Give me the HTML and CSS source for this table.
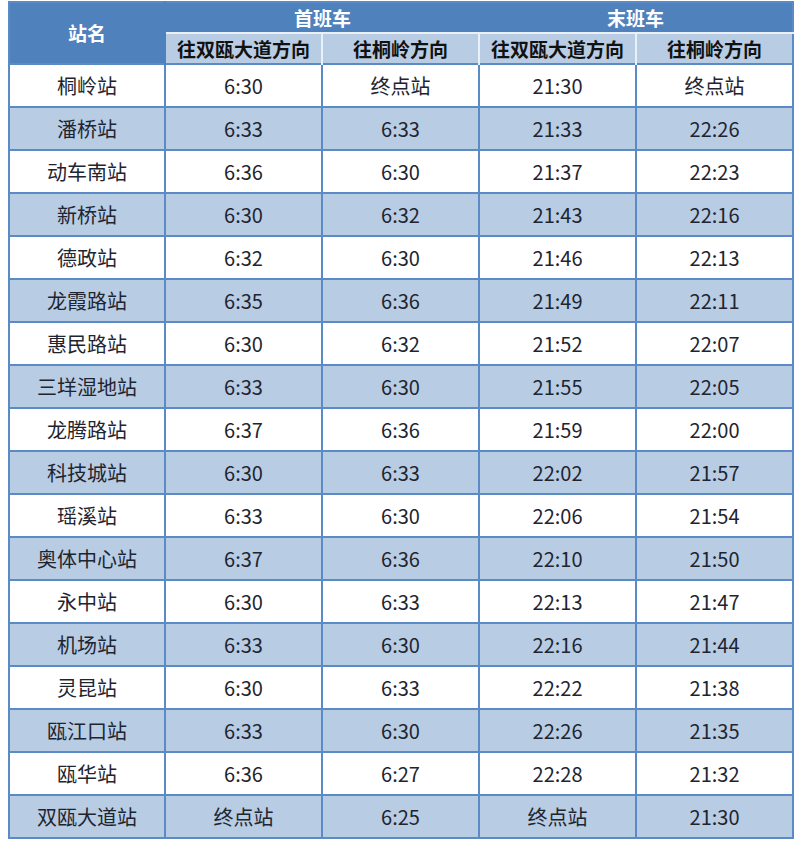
FILE: index.html
```html
<!DOCTYPE html>
<html lang="zh-CN">
<head>
<meta charset="utf-8">
<link rel="stylesheet" href="styles.css">
</head>
<body>
<table class="tt">
  <colgroup>
    <col class="c1"><col class="c"><col class="c"><col class="c"><col class="c">
  </colgroup>
  <thead>
    <tr class="h1">
      <th rowspan="2" class="name">站名</th>
      <th colspan="2" class="grp">首班车</th>
      <th colspan="2" class="grp">末班车</th>
    </tr>
    <tr class="h2">
      <th>往双瓯大道方向</th><th>往桐岭方向</th><th>往双瓯大道方向</th><th>往桐岭方向</th>
    </tr>
  </thead>
  <tbody>
    <tr><td>桐岭站</td><td>6:30</td><td>终点站</td><td>21:30</td><td>终点站</td></tr>
    <tr><td>潘桥站</td><td>6:33</td><td>6:33</td><td>21:33</td><td>22:26</td></tr>
    <tr><td>动车南站</td><td>6:36</td><td>6:30</td><td>21:37</td><td>22:23</td></tr>
    <tr><td>新桥站</td><td>6:30</td><td>6:32</td><td>21:43</td><td>22:16</td></tr>
    <tr><td>德政站</td><td>6:32</td><td>6:30</td><td>21:46</td><td>22:13</td></tr>
    <tr><td>龙霞路站</td><td>6:35</td><td>6:36</td><td>21:49</td><td>22:11</td></tr>
    <tr><td>惠民路站</td><td>6:30</td><td>6:32</td><td>21:52</td><td>22:07</td></tr>
    <tr><td>三垟湿地站</td><td>6:33</td><td>6:30</td><td>21:55</td><td>22:05</td></tr>
    <tr><td>龙腾路站</td><td>6:37</td><td>6:36</td><td>21:59</td><td>22:00</td></tr>
    <tr><td>科技城站</td><td>6:30</td><td>6:33</td><td>22:02</td><td>21:57</td></tr>
    <tr><td>瑶溪站</td><td>6:33</td><td>6:30</td><td>22:06</td><td>21:54</td></tr>
    <tr><td>奥体中心站</td><td>6:37</td><td>6:36</td><td>22:10</td><td>21:50</td></tr>
    <tr><td>永中站</td><td>6:30</td><td>6:33</td><td>22:13</td><td>21:47</td></tr>
    <tr><td>机场站</td><td>6:33</td><td>6:30</td><td>22:16</td><td>21:44</td></tr>
    <tr><td>灵昆站</td><td>6:30</td><td>6:33</td><td>22:22</td><td>21:38</td></tr>
    <tr><td>瓯江口站</td><td>6:33</td><td>6:30</td><td>22:26</td><td>21:35</td></tr>
    <tr><td>瓯华站</td><td>6:36</td><td>6:27</td><td>22:28</td><td>21:32</td></tr>
    <tr><td>双瓯大道站</td><td>终点站</td><td>6:25</td><td>终点站</td><td>21:30</td></tr>
  </tbody>
</table>
</body>
</html>
```
FILE: styles.css
```css
html, body {
  margin: 0;
  padding: 0;
  background: #ffffff;
}
body {
  padding: 1px 8px 0 8px;
  font-family: "Noto Sans CJK SC", "Noto Sans", sans-serif;
}
.tt {
  width: 784px;
  border-collapse: collapse;
  table-layout: fixed;
  border: 2px solid #5b8bc7;
}
.c1 { width: 156px; }
.c { width: 157px; }
.tt th {
  padding: 0;
  font-weight: 700;
  font-size: 19px;
  line-height: 22px;
  text-align: center;
}
.h1 th {
  background: #4f81bd;
  color: #ffffff;
  height: 29px;
  border: 0;
}
.h1 .name {
  border-right: 2px solid #4f81bd;
}
.h2 th {
  background: #b8cce4;
  color: #111111;
  height: 29px;
  border-top: 2px solid #eaf0f8;
  border-left: 2px solid #eaf0f8;
}
.tt td {
  padding: 0;
  height: 41px;
  text-align: center;
  font-size: 20px;
  line-height: 24px;
  color: #1e2530;
  border: 2px solid #5b8bc7;
}
.tt tbody tr:nth-child(even) td {
  background: #b8cce4;
}
.tt tbody tr:nth-child(odd) td {
  background: #ffffff;
}
```
